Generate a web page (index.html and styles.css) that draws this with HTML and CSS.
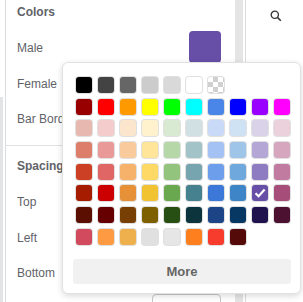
FILE: index.html
```html
<!DOCTYPE html>
<html>
<head lang="en">
    <meta charset="UTF-8">
    <title></title>
    <link rel="stylesheet" href="styles.css">
</head>
<body>
<div class="app">
    <div class="gutter"><div class="gutter-bar"></div></div>
    <div class="panel">
        <div class="section">
            <div class="title">Colors</div>
            <div class="row"><span>Male</span><span class="pick"></span></div>
            <div class="row"><span>Female</span></div>
            <div class="row"><span>Bar Border</span></div>
        </div>
        <div class="section">
            <div class="title">Spacing</div>
            <div class="row"><span>Top</span></div>
            <div class="row"><span>Left</span></div>
            <div class="row"><span>Bottom</span></div>
            <div class="row"><span></span><span class="field"></span></div>
        </div>
    </div>
    <div class="scroll"><div class="thumb"></div></div>
    <div class="side">
        <svg class="search" width="12" height="12" viewBox="0 0 12 12">
            <circle cx="4.8" cy="4.8" r="3.6" fill="none" stroke="#333" stroke-width="1.3"/>
            <line x1="7.4" y1="7.4" x2="10.8" y2="10.8" stroke="#333" stroke-width="1.5"/>
        </svg>
    </div>
</div>

<div class="popup">
    <div class="grid">
        <span class="sw" style="background:#000000"></span>
        <span class="sw" style="background:#434343"></span>
        <span class="sw" style="background:#666666"></span>
        <span class="sw" style="background:#cccccc"></span>
        <span class="sw" style="background:#d9d9d9"></span>
        <span class="sw" style="background:#ffffff"></span>
        <span class="sw clear"></span>
        <span></span><span></span><span></span>

        <span class="sw" style="background:#980000"></span>
        <span class="sw" style="background:#ff0000"></span>
        <span class="sw" style="background:#ff9900"></span>
        <span class="sw" style="background:#ffff00"></span>
        <span class="sw" style="background:#00ff00"></span>
        <span class="sw" style="background:#00ffff"></span>
        <span class="sw" style="background:#4a86e8"></span>
        <span class="sw" style="background:#0000ff"></span>
        <span class="sw" style="background:#9900ff"></span>
        <span class="sw" style="background:#ff00ff"></span>

        <span class="sw" style="background:#e6b8af"></span>
        <span class="sw" style="background:#f4cccc"></span>
        <span class="sw" style="background:#fce5cd"></span>
        <span class="sw" style="background:#fff2cc"></span>
        <span class="sw" style="background:#d9ead3"></span>
        <span class="sw" style="background:#d0e0e3"></span>
        <span class="sw" style="background:#c9daf8"></span>
        <span class="sw" style="background:#cfe2f3"></span>
        <span class="sw" style="background:#d9d2e9"></span>
        <span class="sw" style="background:#ead1dc"></span>

        <span class="sw" style="background:#dd7e6b"></span>
        <span class="sw" style="background:#ea9999"></span>
        <span class="sw" style="background:#f9cb9c"></span>
        <span class="sw" style="background:#ffe599"></span>
        <span class="sw" style="background:#b6d7a8"></span>
        <span class="sw" style="background:#a2c4c9"></span>
        <span class="sw" style="background:#a4c2f4"></span>
        <span class="sw" style="background:#9fc5e8"></span>
        <span class="sw" style="background:#b4a7d6"></span>
        <span class="sw" style="background:#d5a6bd"></span>

        <span class="sw" style="background:#cc4125"></span>
        <span class="sw" style="background:#e06666"></span>
        <span class="sw" style="background:#f6b26b"></span>
        <span class="sw" style="background:#ffd966"></span>
        <span class="sw" style="background:#93c47d"></span>
        <span class="sw" style="background:#76a5af"></span>
        <span class="sw" style="background:#6d9eeb"></span>
        <span class="sw" style="background:#6fa8dc"></span>
        <span class="sw" style="background:#8e7cc3"></span>
        <span class="sw" style="background:#c27ba0"></span>

        <span class="sw" style="background:#a61c00"></span>
        <span class="sw" style="background:#cc0000"></span>
        <span class="sw" style="background:#e69138"></span>
        <span class="sw" style="background:#f1c232"></span>
        <span class="sw" style="background:#6aa84f"></span>
        <span class="sw" style="background:#45818e"></span>
        <span class="sw" style="background:#3c78d8"></span>
        <span class="sw" style="background:#3d85c6"></span>
        <span class="sw checked" style="background:#674ea7">
            <svg width="14" height="14" viewBox="0 0 14 14"><path d="M2.5 7.2 L5.6 10.2 L11.6 3.6" fill="none" stroke="#fff" stroke-width="2.2"/></svg>
        </span>
        <span class="sw" style="background:#a64d79"></span>

        <span class="sw" style="background:#5b0f00"></span>
        <span class="sw" style="background:#660000"></span>
        <span class="sw" style="background:#783f04"></span>
        <span class="sw" style="background:#7f6000"></span>
        <span class="sw" style="background:#274e13"></span>
        <span class="sw" style="background:#0c343d"></span>
        <span class="sw" style="background:#1c4587"></span>
        <span class="sw" style="background:#073763"></span>
        <span class="sw" style="background:#20124d"></span>
        <span class="sw" style="background:#4c1130"></span>

        <span class="sw" style="background:#d14a5e"></span>
        <span class="sw" style="background:#fe9a41"></span>
        <span class="sw" style="background:#eeb04d"></span>
        <span class="sw" style="background:#e0e0e0"></span>
        <span class="sw" style="background:#e6e6e6"></span>
        <span class="sw" style="background:#fe7f1e"></span>
        <span class="sw" style="background:#f73b2c"></span>
        <span class="sw" style="background:#550a0a"></span>
    </div>
    <div class="more">More</div>
</div>
</body>
</html>
```

FILE: styles.css
```css
*{
    margin: 0;
    padding: 0;
    box-sizing: border-box;
}
body {
    width: 303px;
    height: 302px;
    overflow: hidden;
    background: #fff;
    font: 12px "Liberation Sans", Arial, sans-serif;
    color: #5f6368;
}
.app {
    display: flex;
    height: 302px;
    overflow: hidden;
}
.gutter {
    width: 6px;
    border-right: 1px solid #dadce0;
}
.gutter-bar {
    width: 3px;
    height: 205px;
    margin-top: 97px;
    background: #e3e4e6;
}
.panel {
    width: 229px;
}
.section {
    padding: 0 14px 7.5px 11px;
    border-bottom: 1px solid #e0e0e0;
}
.section + .section {
    padding-top: 8px;
    border-bottom: none;
}
.title {
    height: 31px;
    line-height: 25.5px;
    font-weight: bold;
}
.row {
    height: 35.5px;
    line-height: 35.5px;
    display: flex;
    justify-content: space-between;
    align-items: center;
    white-space: nowrap;
}
.pick {
    width: 32px;
    height: 32px;
    margin-bottom: 3px;
    border-radius: 4px;
    background: #674ea7;
}
.field {
    width: 69px;
    height: 28px;
    margin-bottom: 2px;
    border: 1px solid #c8c8c8;
    border-radius: 4px;
}
.scroll {
    width: 11px;
    border-right: 1px solid #dadce0;
}
.thumb {
    width: 8px;
    height: 100%;
    background: #e5e5e5;
}
.side {
    flex: 1;
    display: flex;
    justify-content: center;
    padding-top: 10px;
    padding-left: 2px;
}
.search {
    display: block;
}

/* color picker popup */
.popup {
    position: absolute;
    left: 62px;
    top: 62px;
    width: 239px;
    height: 232px;
    background: #fff;
    border: 1px solid #e2e2e2;
    border-radius: 6px;
    box-shadow: 0 2px 6px rgba(0, 0, 0, 0.15);
    padding: 4px 9px 9px 10px;
}
.grid {
    display: grid;
    grid-template-columns: repeat(10, 16px);
    grid-auto-rows: 16px;
    column-gap: 6px;
    row-gap: 5.67px;
    margin-left: 3px;
    margin-top: 10px;
}
.sw {
    display: flex;
    align-items: center;
    justify-content: center;
    border-radius: 3px;
    box-shadow: 0 0 0 1px rgba(0, 0, 0, 0.12);
}
.clear {
    background-color: #fff;
    background-image: conic-gradient(#d0d0d0 25%, #fff 0 50%, #d0d0d0 0 75%, #fff 0);
    background-size: 10px 10px;
    background-position: -5px -5px;
}
.more {
    margin-top: 14.3px;
    height: 25px;
    line-height: 25px;
    background: #f1f1f1;
    border-radius: 3px;
    text-align: center;
    font-weight: bold;
    font-size: 13px;
    color: #666;
}
```
